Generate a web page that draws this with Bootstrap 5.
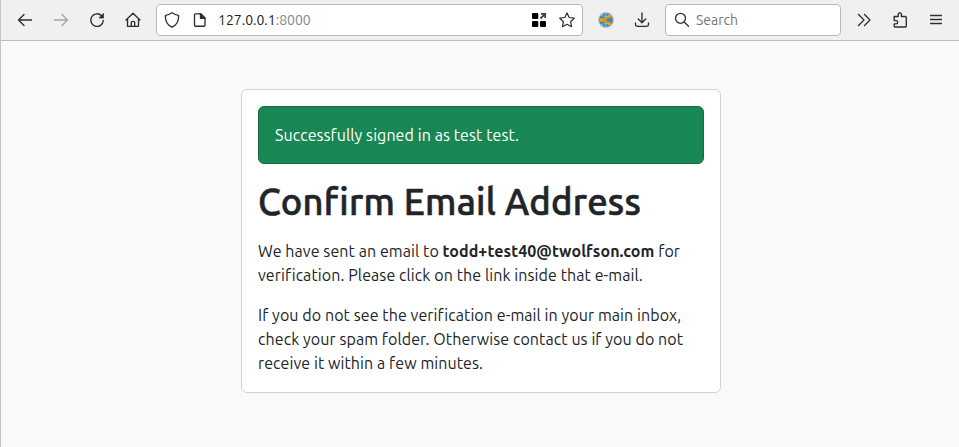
<!DOCTYPE html>
<html lang="en">
<head>
<meta charset="utf-8">
<meta name="viewport" content="width=device-width, initial-scale=1">
<title>Confirm Email Address</title>
<link href="https://cdn.jsdelivr.net/npm/bootstrap@5.3.0/dist/css/bootstrap.min.css" rel="stylesheet">
<style>
body{font-family:Ubuntu,"Noto Sans",sans-serif;background:#f8f9fb;height:447px;overflow:hidden;border-left:1px solid #c4c4c4}
.toolbar{height:41px;background:#f0f0f0;border-bottom:1px solid #bcbcbc;color:#2e2e32;padding-left:16px}
.toolbar svg{display:block;flex:none;fill:none;stroke:currentColor;stroke-width:1.35;stroke-linecap:round;stroke-linejoin:round}
.tools{gap:20px}
.dim{color:#a5a5a5}
.field{height:32px;background:#fff;border:1px solid #b9b9b9;border-radius:4px;font-size:14px}
.url{width:427px;margin:0 15px;padding:0 7px;gap:12px}
.find{width:176px;margin:0 15px;padding:0 8px;gap:6px;color:#747478}
.find svg{color:#333}
.address{margin-left:-2px;color:#222}
.port{color:#858589}
.panel{width:480px;margin:48px auto 0 240px;border-color:#d0d2d4;border-radius:6px}
.notice{background:#198754;border-color:#146c43;color:#fff}
.line{display:block;white-space:nowrap;letter-spacing:.085px;font-variant-ligatures:common-ligatures}
.card-body{line-height:24px}
.card-body p{position:relative;top:-.5px}
h1.title{font-size:36.385px;line-height:43.7px;font-weight:500;letter-spacing:.23px;-webkit-text-stroke:.6px currentColor;white-space:nowrap}
</style>
<script src="https://cdn.jsdelivr.net/npm/bootstrap@5.3.0/dist/js/bootstrap.bundle.min.js" defer></script>
</head>
<body>
<nav class="toolbar d-flex align-items-center">
  <div class="tools d-flex">
  <svg width="16" height="16" viewBox="0 0 16 16"><path d="M7 2.500 1.500 8 7 13.500M1.500 8H14.500"/></svg>
  <svg class="dim" width="16" height="16" viewBox="0 0 16 16"><path d="M9 2.500 14.500 8 9 13.500M14.500 8H1.500"/></svg>
  <svg width="16" height="16" viewBox="0 0 16 16"><path d="M12.800 4A6.300 6.300 0 1 0 14.300 8.500"/><path d="M14.500 1.800V6H10.300Z" fill="currentColor" stroke-width=".8"/></svg>
  <svg width="16" height="16" viewBox="0 0 16 16"><path d="M1 8 8 1.300 15 8M2.500 7V14.300H13.500V7M6.300 14V10.200Q6.300 9.300 8 9.300T9.700 10.200V14"/></svg>
  </div>
  <div class="field url d-flex align-items-center">
    <svg width="16" height="16" viewBox="0 0 16 16"><path d="M8 .8Q11 3 14.500 3.300C15 8.500 12.500 13 8 15.200 3.500 13 1 8.500 1.500 3.300Q5 3 8 .8Z"/></svg>
    <svg width="16" height="16" viewBox="0 0 16 16"><path d="M3.500 1.800H8.800L13 6V13.200Q13 14.200 12 14.200H3.500Q2.500 14.200 2.500 13.200V2.800Q2.500 1.800 3.500 1.800Z"/><path d="M8.500 2V6.300H13Z" fill="currentColor"/></svg>
    <span class="address">127.0.0.1<span class="port">:8000</span></span>
    <svg class="ms-auto" width="16" height="16" viewBox="0 0 16 16"><g fill="#000" stroke="none"><rect x="1" y="1" width="6.300" height="6" rx="1"/><rect x="1" y="9" width="6.300" height="6" rx="1"/><rect x="9" y="9" width="6" height="6" rx="1"/></g><path d="M9.500 6.500 13.500 2.500M10 1.800H14.200V6" stroke="#444" stroke-width="1.800" stroke-linecap="butt" stroke-linejoin="miter"/></svg>
    <svg width="16" height="16" viewBox="0 0 16 16"><path d="M8 .9 10.200 5.500 15.200 6.200 11.600 9.700 12.500 14.700 8 12.300 3.500 14.700 4.400 9.700 .8 6.200 5.800 5.500Z" stroke-width="1.200"/></svg>
  </div>
  <div class="tools d-flex">
  <svg width="16" height="16" viewBox="0 0 16 16"><circle cx="8" cy="8" r="7.400" fill="#468a92" stroke="#afbff0" stroke-width="1.200"/><path d="M8 1V15M3 3.500Q8 6 13 3.500M3 12.500Q8 10 13 12.500" stroke="#a7c7e5" stroke-width=".7"/><path d="M11.300 4.300 4 8 11.300 11.500" stroke="#ef9b20" stroke-width="1.500"/><g fill="#f49a13" stroke="none"><circle cx="11.500" cy="4.300" r="1.700"/><circle cx="3.400" cy="8" r="2.100"/><circle cx="11.500" cy="11.500" r="1.700"/></g></svg>
  <svg width="16" height="16" viewBox="0 0 16 16"><path d="M8 1V10.500M4.200 7 8 10.700 11.800 7M1.500 10.800V12.500Q1.500 14.300 3.300 14.300H12.700Q14.500 14.300 14.500 12.500V10.800"/></svg>
  </div>
  <div class="field find d-flex align-items-center">
    <svg width="16" height="16" viewBox="0 0 16 16"><circle cx="6.500" cy="6.300" r="5"/><path d="M10.200 10 14.500 14.300"/></svg>
    <span>Search</span>
  </div>
  <div class="tools d-flex">
  <svg width="16" height="16" viewBox="0 0 16 16"><path d="M2.500 2.500 8 8 2.500 13.500M8.500 2.500 14 8 8.500 13.500"/></svg>
  <svg width="16" height="16" viewBox="0 0 16 16"><path d="M2.200 4.500H6.200V2.500Q6.200 .8 7.800 .8T9.400 2.500V4.500H13.300Q14.300 4.500 14.300 5.500V14.200Q14.300 15 13.500 15H3Q2.200 15 2.200 14.200V11.800H4Q5.700 11.800 5.700 10.200T4 8.600H2.200Z"/></svg>
  <svg width="16" height="16" viewBox="0 0 16 16"><path d="M2 3.500H14M2 7.500H14M2 11.500H14" stroke-linecap="butt"/></svg>
  </div>
</nav>
<main class="card panel">
  <div class="card-body">
    <div class="alert notice mb-3" role="alert"><span class="line">Successfully signed in as test test.</span></div>
    <h1 class="title mb-3">Confirm Email Address</h1>
    <p class="mb-3"><span class="line">We have sent an email to <strong>todd+test40@twolfson.com</strong> for</span>
    <span class="line">verification. Please click on the link inside that e-mail.</span></p>
    <p class="mb-0"><span class="line">If you do not see the verification e-mail in your main inbox,</span>
    <span class="line">check your spam folder. Otherwise contact us if you do not</span>
    <span class="line">receive it within a few minutes.</span></p>
  </div>
</main>
</body>
</html>
